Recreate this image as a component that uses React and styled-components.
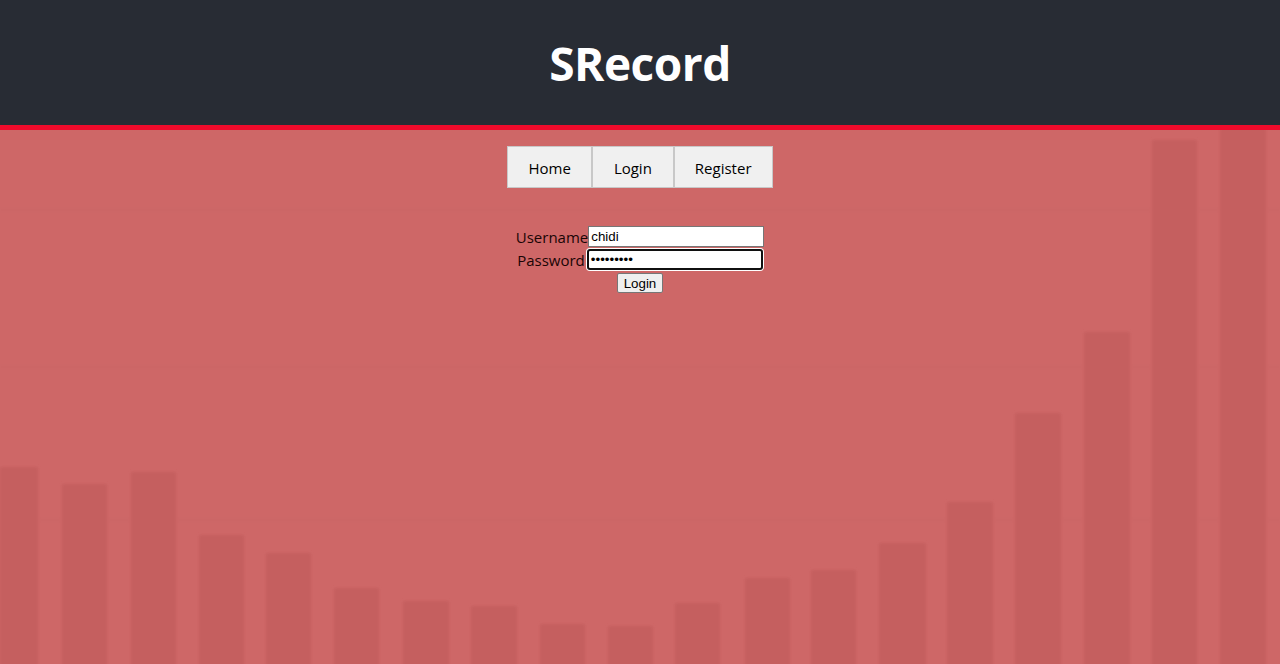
import React from "react";
import styled, { createGlobalStyle } from "styled-components";

const GlobalStyle = createGlobalStyle`
    body {
        margin: 0;
        font-family: "Open Sans", "Noto Sans", sans-serif;
        background-color: #ce6767;
    }
`;

const Page = styled.div`
    min-height: 100vh;
    display: flex;
    flex-direction: column;
`;

const Header = styled.header`
    height: 125px;
    display: flex;
    align-items: center;
    justify-content: center;
    background-color: #282c34;
    border-bottom: 5px solid #ef0b2b;
`;

const Title = styled.h1`
    margin: 0;
    color: white;
    font-size: 46px;
    font-weight: 700;
    letter-spacing: -0.5px;
`;

const Main = styled.main`
    flex: 1;
    position: relative;
    overflow: hidden;
    display: flex;
    flex-direction: column;
    align-items: center;
    padding-top: 16px;
    background-color: #ce6767;
`;

const Backdrop = styled.svg`
    position: absolute;
    top: 0;
    left: 0;
    width: 100%;
    height: 100%;
    z-index: 0;
`;

const Nav = styled.nav`
    position: relative;
    z-index: 1;
    display: flex;
`;

const NavButton = styled.button`
    height: 42px;
    padding: 1px ${(p) => p.$pad}px 0;
    border: 1px solid #c8c8c8;
    background-color: #f0f0f0;
    color: #000;
    font-family: "Open Sans", "Noto Sans", sans-serif;
    font-size: 15px;
    cursor: pointer;
`;

const LoginForm = styled.form`
    position: relative;
    z-index: 1;
    margin-top: 38px;
    display: flex;
    flex-direction: column;
    align-items: center;
    gap: 2px;
`;

const Row = styled.div`
    display: flex;
    align-items: center;
`;

const Label = styled.label`
    font-family: "Open Sans", "Noto Sans", sans-serif;
    font-size: 15px;
    color: #1a0505;
    margin-right: ${(p) => p.$gap}px;
`;

const Field = styled.input`
    box-sizing: border-box;
    width: 176px;
    height: 21px;
    padding: 1px 2px;
    border: ${(p) => (p.$focused ? "2px solid #101010" : "1px solid #767676")};
    border-radius: ${(p) => (p.$focused ? "3px" : "0")};
    box-shadow: ${(p) => (p.$focused ? "0 0 0 1px #fff" : "none")};
    background: #fff;
    font-family: "Liberation Sans", Arial, sans-serif;
    font-size: 13.33px;
    color: #000;
    outline: none;
`;

const SubmitButton = styled.button`
    margin-top: 1px;
    height: 20px;
    padding: 0 6px;
    border: 1px solid #767676;
    border-radius: 2px;
    background-color: #efefef;
    font-family: "Liberation Sans", Arial, sans-serif;
    font-size: 13.33px;
    color: #000;
`;

// 배경 차트 막대 (x, width, top) - 헤더 아래 기준
const bars = [
    [0, 38, 337], [62, 45, 354], [131, 45, 342], [199, 45, 405], [266, 45, 423],
    [334, 45, 458], [403, 46, 471], [471, 46, 476], [540, 45, 494], [608, 45, 496],
    [675, 45, 473], [745, 45, 448], [811, 45, 440], [879, 47, 413], [947, 46, 372],
    [1015, 46, 283], [1084, 46, 202], [1152, 45, 10], [1220, 46, -2],
];

const ChartBackdrop = () => (
    <Backdrop viewBox="0 0 1280 534" preserveAspectRatio="xMinYMin slice">
        <defs>
            <filter id="soft" x="-5%" y="-5%" width="110%" height="110%">
                <feGaussianBlur stdDeviation="1.5" />
            </filter>
        </defs>
        <g filter="url(#soft)">
            {[80, 237, 390].map((y) => (
                <line key={y} x1="0" x2="1280" y1={y} y2={y} stroke="rgba(120,20,20,0.01)" strokeWidth="3" />
            ))}
            {bars.map(([x, w, top]) => (
                <rect key={x} x={x} y={top} width={w} height={560 - top} fill="#c55f5f" />
            ))}
        </g>
    </Backdrop>
);

const App = () => {
    return (
        <Page>
            <GlobalStyle />
            <Header>
                <Title>SRecord</Title>
            </Header>
            <Main>
                <ChartBackdrop />
                <Nav>
                    <NavButton $pad={20}>Home</NavButton>
                    <NavButton $pad={21}>Login</NavButton>
                    <NavButton $pad={20}>Register</NavButton>
                </Nav>
                <LoginForm onSubmit={(e) => e.preventDefault()}>
                    <Row>
                        <Label htmlFor="username" $gap={0}>Username</Label>
                        <Field id="username" type="text" defaultValue="chidi" />
                    </Row>
                    <Row>
                        <Label htmlFor="password" $gap={2}>Password</Label>
                        <Field id="password" type="password" defaultValue="123456789" $focused />
                    </Row>
                    <SubmitButton type="submit">Login</SubmitButton>
                </LoginForm>
            </Main>
        </Page>
    );
};

export default App;
